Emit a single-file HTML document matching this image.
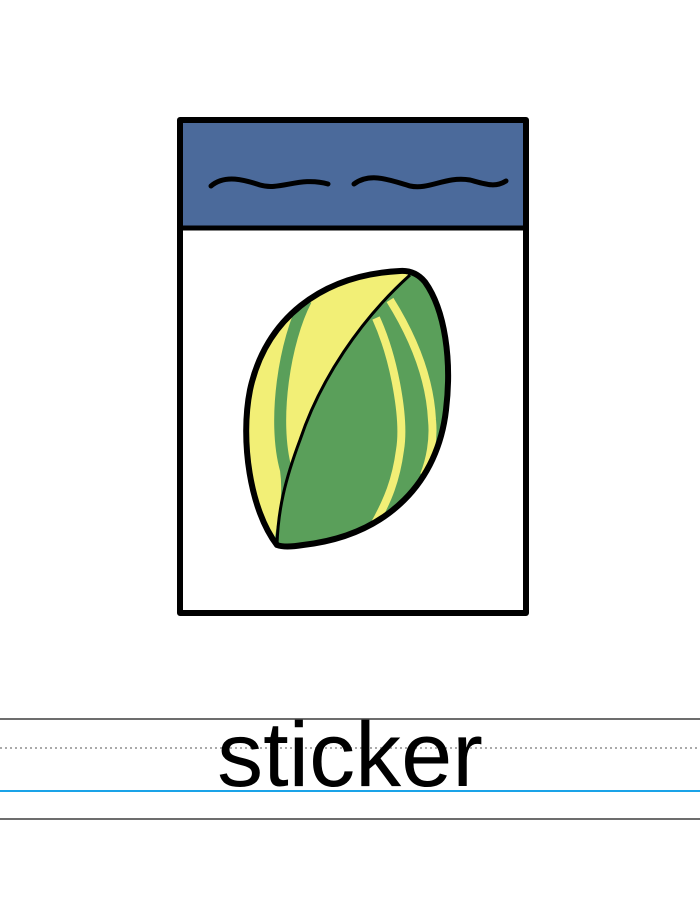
<!DOCTYPE html>
<html><head><meta charset="utf-8"><style>
html,body{margin:0;padding:0;background:#fff;width:700px;height:900px;overflow:hidden}
.t{position:absolute;left:0;width:700px;text-align:center;top:700px;font-family:"Liberation Sans",sans-serif;font-weight:normal;font-size:92px;line-height:110px;color:#000}
</style></head><body>
<svg width="700" height="900" style="position:absolute;left:0;top:0">
<defs><clipPath id="b"><path d="M277,545 C250,510 240,440 250,390 C265,320 320,275 400,271 Q415,270 425,282 C445,310 452,360 446,410 C438,480 390,535 303,545 Q285,548 277,545 Z"/></clipPath>
<clipPath id="r"><path d="M410,275 C360,320 320,380 300,440 C285,480 278,510 277,545 L470,560 L470,250 Z"/></clipPath></defs>
<rect x="180" y="120" width="346" height="108" fill="#4b6a9b"/>
<rect x="180" y="120" width="346" height="493" fill="none" stroke="#000" stroke-width="6" stroke-linejoin="round"/>
<line x1="180" y1="228" x2="526" y2="228" stroke="#000" stroke-width="5"/>
<path d="M211,186 C225,174 245,180 260,185 C280,191 300,176 328,184" fill="none" stroke="#000" stroke-width="5" stroke-linecap="round"/>
<path d="M354,184 C370,172 390,180 410,186 C430,190 445,176 470,180 C485,184 495,188 506,181" fill="none" stroke="#000" stroke-width="5" stroke-linecap="round"/>
<g clip-path="url(#b)">
<rect x="230" y="260" width="240" height="300" fill="#f2ef76"/>
<path d="M306,300 C285,340 272,420 286,470 C290,500 283,520 280,545" fill="none" stroke="#5a9f5a" stroke-width="12"/>
<g clip-path="url(#r)">
<rect x="230" y="260" width="240" height="300" fill="#5a9f5a"/>
<path d="M376,318 C395,360 405,420 400,450 C396,480 388,500 374,525" fill="none" stroke="#f2ef76" stroke-width="8"/>
<path d="M390,300 C415,340 430,380 432,420 C434,440 430,460 424,475" fill="none" stroke="#f2ef76" stroke-width="8"/>
</g>
</g>
<path d="M410,275 C360,320 320,380 300,440 C285,480 278,510 277,545" fill="none" stroke="#000" stroke-width="3"/>
<path d="M277,545 C250,510 240,440 250,390 C265,320 320,275 400,271 Q415,270 425,282 C445,310 452,360 446,410 C438,480 390,535 303,545 Q285,548 277,545 Z" fill="none" stroke="#000" stroke-width="6" stroke-linejoin="round"/>
<line x1="0" y1="719" x2="700" y2="719" stroke="#6d6d6d" stroke-width="2"/>
<line x1="0" y1="748" x2="700" y2="748" stroke="#aaa" stroke-width="2" stroke-dasharray="2,3"/>
<line x1="0" y1="791" x2="700" y2="791" stroke="#1aa3e8" stroke-width="2"/>
<line x1="0" y1="819" x2="700" y2="819" stroke="#6d6d6d" stroke-width="2"/>
</svg>
<div class="t">sticker</div>
</body></html>
